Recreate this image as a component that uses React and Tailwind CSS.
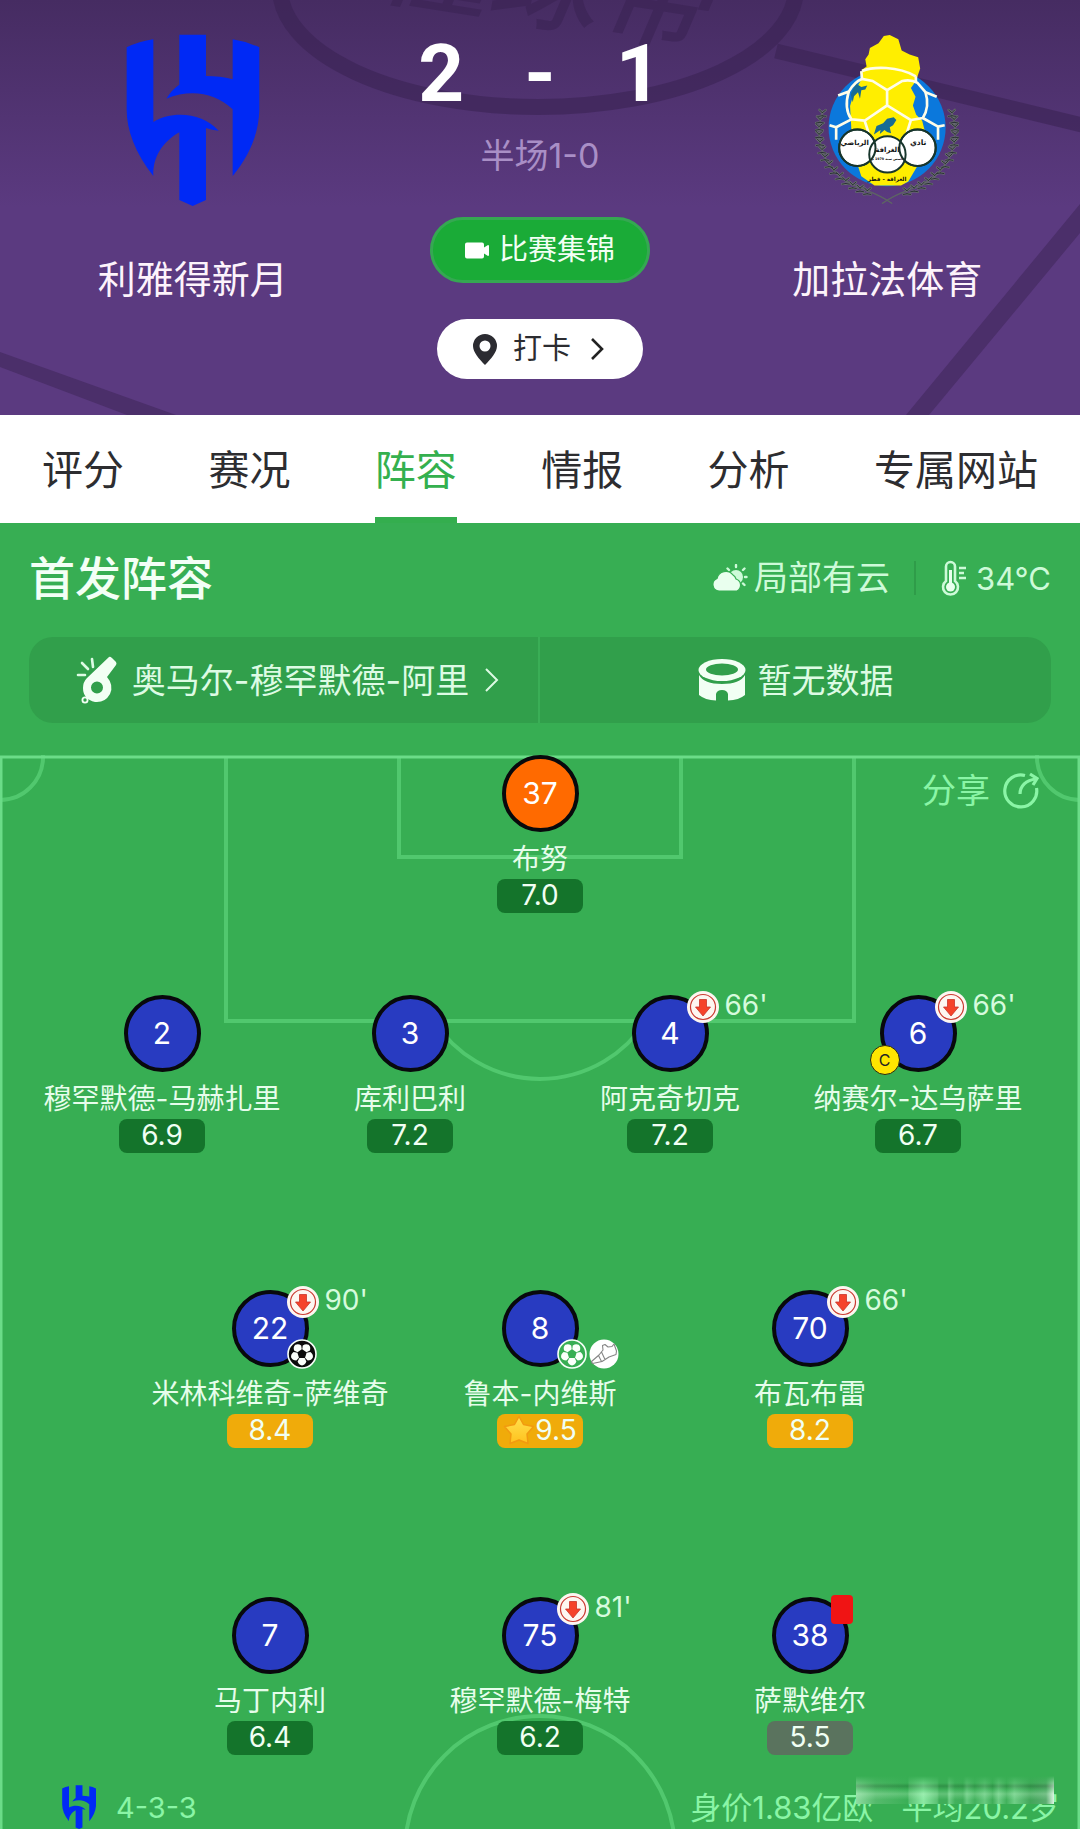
import React from 'react';

const tabs = ['评分', '赛况', '阵容', '情报', '分析', '专属网站'];

const keeper = { number: 37, name: '布努', rating: '7.0', keeper: true };

const leftBacks = [
  { number: 2, name: '穆罕默德-马赫扎里', rating: '6.9' },
  { number: 3, name: '库利巴利', rating: '7.2' },
];

const rightBacks = [
  { number: 4, name: '阿克奇切克', rating: '7.2', off: "66'" },
  { number: 6, name: '纳赛尔-达乌萨里', rating: '6.7', off: "66'", captain: true },
];

const midfielders = [
  { number: 22, name: '米林科维奇-萨维奇', rating: '8.4', off: "90'", goal: '#0b0b0b' },
  { number: 8, name: '鲁本-内维斯', rating: '9.5', goal: '#37ae53', assist: true, best: true },
  { number: 70, name: '布瓦布雷', rating: '8.2', off: "66'" },
];

const forwards = [
  { number: 7, name: '马丁内利', rating: '6.4' },
  { number: 75, name: '穆罕默德-梅特', rating: '6.2', off: "81'" },
  { number: 38, name: '萨默维尔', rating: '5.5', redCard: true },
];

function ratingColor(rating) {
  const value = Number(rating);
  if (value >= 8) return 'bg-[#f0ab0a]';
  if (value < 6) return 'bg-[#5a735e]';
  return 'bg-[#14742b]';
}

function HilalLogo({ className }) {
  return (
    <svg viewBox="80 42 400 516" className={className} fill="#0029f5" aria-hidden="true">
      <path d="M82 82 Q120 64 162 58 V306 C220 270 310 278 358 332 Q338 330 320 324 V540 L280 558 L240 540 V337 C190 366 160 410 162 468 C108 400 82 330 82 270 Z" />
      <path d="M240 44 H320 V168 Q362 168 400 178 V58 Q440 64 480 82 V270 C478 340 452 405 400 468 V268 C345 215 270 208 201 236 Q218 208 240 194 Z" />
    </svg>
  );
}

function GharafaLogo({ className }) {
  const leaves = [
    [62, 280], [55, 300], [52, 322], [52, 345], [55, 368], [61, 391], [70, 413], [82, 434],
    [97, 453], [114, 470], [133, 485], [154, 498], [176, 508], [198, 516],
  ];
  return (
    <svg viewBox="40 42 436 520" className={className} aria-hidden="true">
      {[false, true].map((flip) => (
        <g key={String(flip)} transform={flip ? 'translate(516 0) scale(-1 1)' : undefined} fill="none" strokeLinecap="round">
          <path d="M64 275 C36 350 60 440 140 490 C180 514 225 518 272 554" stroke="#5d6563" strokeWidth="4" />
          {leaves.map(([x, y]) => (
            <path key={y} d={`M${x} ${y} l-9 -9 M${x} ${y} l10 -8 M${x} ${y + 9} l-11 2 M${x} ${y + 9} l11 2`} stroke="#6a7170" strokeWidth="7" />
          ))}
          {leaves.map(([x, y]) => (
            <path key={y} d={`M${x} ${y} l-9 -9 M${x} ${y} l10 -8 M${x} ${y + 9} l-11 2 M${x} ${y + 9} l11 2`} stroke="#2a2f35" strokeWidth="3" />
          ))}
        </g>
      ))}
      <circle cx="258" cy="325" r="177" fill="#0b78dc" />
      <path d="M180 180 L182 150 L196 140 L192 118 L202 104 L206 84 L232 70 L248 48 L266 45 L292 58 L302 92 L326 104 L352 112 L358 146 L345 184 L330 205 L344 232 L336 258 L346 286 L364 304 L372 335 L362 420 L322 488 L300 500 L220 500 L180 472 L160 410 L150 330 L146 260 L158 218 Z" fill="#ffee00" />
      <path d="M164 192 l16 10 18 -4 -6 12 -12 2 -4 26 -6 -20 -12 12 -4 18 -6 -24 Z M218 346 l8 -26 20 -8 12 -14 20 -4 8 8 -10 16 -10 6 4 18 -12 -4 -8 -6 -14 12 2 -12 Z" fill="#176c94" />
      <g fill="none" stroke="#fffde8" strokeWidth="8">
        <path d="M182 154 C215 140 290 138 345 170" />
        <path d="M110 228 L142 216 Q160 186 182 178 L214 184 L258 212 L304 184 Q330 178 350 190 L374 218 L408 232" />
        <path d="M258 212 V258 L190 304 L202 340 M258 258 L330 302 L318 340 M142 216 C132 250 136 280 150 300 L190 304 M374 218 C384 250 380 274 366 296 L330 302 M150 300 L104 324 L84 318 M104 324 V362 M366 296 L412 322 L432 318 M412 322 V362 M182 178 L180 154 M345 190 V170" />
      </g>
      <g fill="#ffffff" stroke="#17352b" strokeWidth="6">
        <circle cx="168" cy="386" r="55" />
        <circle cx="350" cy="386" r="55" />
        <circle cx="259" cy="406" r="55" />
      </g>
      <g fill="none" stroke="#17352b" strokeWidth="6">
        <circle cx="168" cy="386" r="55" />
        <circle cx="350" cy="386" r="55" />
      </g>
      <g fill="#111111" fontFamily="DejaVu Sans, sans-serif" textAnchor="middle" fontWeight="700">
        <text x="160" y="378" fontSize="21">الرياضي</text>
        <text x="352" y="378" fontSize="23">نادي</text>
        <text x="259" y="398" fontSize="21">الغرافة</text>
        <text x="259" y="424" fontSize="10">تأسس سنة 1979 م</text>
        <text x="258" y="487" fontSize="17">الغرافة - قطر</text>
      </g>
    </svg>
  );
}

function HeaderBackdrop() {
  return (
    <svg viewBox="0 0 1080 415" preserveAspectRatio="xMidYMid slice" className="absolute inset-0 w-full h-full" aria-hidden="true">
      <g fill="none" stroke="#3b2354" strokeOpacity="0.6">
        <ellipse cx="538" cy="-12" rx="258" ry="119" strokeWidth="16" />
        <path d="M776 51 L1090 127" strokeWidth="15" />
      </g>
      <path d="M1080 204 L906 415 H929 L1080 233 Z M0 352 L176 415 H127 L0 367 Z" fill="#3b2354" fillOpacity="0.5" />
      <text x="376" y="-6" transform="rotate(9 376 -6)" fontSize="110" fontWeight="500" fontStyle="italic" fill="#3b2354" fillOpacity="0.6" fontFamily="Noto Sans CJK SC, sans-serif">懂球帝</text>
    </svg>
  );
}

function PitchLines() {
  return (
    <svg viewBox="0 0 1080 1074" preserveAspectRatio="xMidYMin slice" className="absolute inset-0 w-full h-full" fill="none" aria-hidden="true">
      <g stroke="#51c86e" strokeWidth="4">
        <path d="M226 2 V266 H854 V2" />
        <path d="M399 2 V102 H681 V2" />
        <path d="M434 266 A126 126 0 0 0 646 266" />
        <circle cx="540" cy="1096" r="135" />
        <circle cx="0" cy="2" r="43" />
        <circle cx="1080" cy="2" r="43" />
      </g>
      <path d="M1 1080 V2 H1079 V1080" stroke="#6bdc88" strokeWidth="3" />
    </svg>
  );
}

function SubOffIcon() {
  return (
    <svg viewBox="0 0 32 32" className="w-8 h-8" aria-hidden="true">
      <circle cx="16" cy="16" r="16" fill="#fdf6f1" />
      <circle cx="16" cy="16" r="12.5" fill="none" stroke="#c93a31" strokeWidth="1.2" />
      <path d="M12.5 8.5 H19.5 V16 H23.5 L16 25 L8.5 16 H12.5 Z" fill="#f5432b" stroke="#c9342a" strokeWidth="0.8" />
    </svg>
  );
}

function BallIcon({ color }) {
  const spots = [0, 72, 144, 216, 288];
  return (
    <svg viewBox="0 0 30 30" className="w-[30px] h-[30px]" aria-hidden="true">
      <circle cx="15" cy="15" r="14" fill={color} stroke="#f6fff8" strokeWidth="1.6" />
      {spots.map((angle) => (
        <path key={angle} d="M12.4 19 H17.6 L19.4 22.4 Q18.2 26 15 26.4 Q11.8 26 10.6 22.4 Z" fill="#fbfffb" transform={`rotate(${angle} 15 15)`} />
      ))}
    </svg>
  );
}

function BootIcon() {
  return (
    <svg viewBox="0 0 30 30" className="w-[30px] h-[30px]" aria-hidden="true">
      <circle cx="15" cy="15" r="14.5" fill="#ffffff" />
      <path d="M2.500 22.500 L10 16 L14 11 L13.500 6.500 L16 5.500 L19 8 L23 7.500 L25 5 L27.500 12 L27 15.500 L20 18 L13 22.500 L3.500 24.500 Z M9.500 16.500 L12.500 22.500 M12.500 13 L16 20.500" fill="#ffffff" stroke="#858585" strokeWidth="1.1" strokeLinejoin="round" />
    </svg>
  );
}

function StarIcon() {
  return (
    <svg viewBox="0 0 32 32" className="w-8 h-8" aria-hidden="true">
      <defs>
        <linearGradient id="star" x1="0" y1="0" x2="0" y2="1">
          <stop offset="0" stopColor="#ffe14e" />
          <stop offset="1" stopColor="#ffc11d" />
        </linearGradient>
      </defs>
      <path d="M16 2.500 L20.500 10.500 L30.500 12.500 L24 20 L25 29.500 L16 26 L7 29.500 L8 20 L1.500 12.500 L11.500 10.500 Z" fill="url(#star)" stroke="#f29a10" strokeWidth="1.5" strokeLinejoin="round" />
    </svg>
  );
}

function Player({ player }) {
  return (
    <div className="flex flex-col items-center">
      <div className="relative">
        <div
          className={`w-[77px] h-[77px] pb-0.5 rounded-full border-4 border-[#08090c] flex items-center justify-center text-white text-[30px] leading-none ${
            player.keeper ? 'bg-[#ff6a00]' : 'bg-[#283bc1]'
          }`}
        >
          {player.number}
        </div>
        {player.off && (
          <div className="absolute left-[55px] -top-1 flex items-start gap-1.5">
            <SubOffIcon />
            <span className="text-[28px] leading-7 text-[#d5fbdd]">{player.off}</span>
          </div>
        )}
        {player.captain && (
          <span className="absolute -left-2.5 top-[50px] w-[30px] h-[30px] rounded-full border border-[#2a2a10] bg-[#ffe500] flex items-center justify-center text-[16px] leading-none text-[#222]">
            C
          </span>
        )}
        {player.goal && (
          <div className="absolute left-[55px] top-[49px] flex gap-0.5">
            <BallIcon color={player.goal} />
            {player.assist && <BootIcon />}
          </div>
        )}
        {player.redCard && (
          <span className="absolute left-[59px] -top-0.5 w-[22px] h-[29px] rounded-sm bg-[#f01414]" />
        )}
      </div>
      <div className="mt-2.5 text-[28px] leading-[34px] text-[#e6fdeb] whitespace-nowrap">{player.name}</div>
      <div
        className={`mt-[3px] w-[86px] h-[34px] pb-0.5 rounded-lg flex items-center justify-center text-[28px] leading-none text-[#f0fff3] ${ratingColor(player.rating)}`}
      >
        {player.best && <StarIcon />}
        {player.rating}
      </div>
    </div>
  );
}

function MatchHeader() {
  return (
    <header className="relative overflow-hidden bg-[linear-gradient(180deg,#462c62_0%,#5b3a80_50%,#5b3a80_100%)]">
      <HeaderBackdrop />
      <div className="relative grid grid-cols-[5fr_4fr_5fr] pb-9">
        <div className="flex flex-col items-center pt-[34px]">
          <HilalLogo className="h-[172px]" />
          <div className="mt-[49px] pb-px text-[38px] leading-[48px] text-[#fdf3fb]">利雅得新月</div>
        </div>

        <div className="flex flex-col items-center pt-11">
          <div className="flex items-center justify-center gap-[60px] font-[Roboto] font-bold text-[80px] leading-[60px] text-white">
            <span>2</span>
            <span>-</span>
            <span>1</span>
          </div>
          <div className="mt-8 text-[34px] leading-10 text-[#a98fc6]">半场1-0</div>
          <button className="mt-[41px] h-[66px] px-8 rounded-full border-[3px] border-[#35a852] bg-[#1aab37] flex items-center gap-2.5 text-[29px] text-[#f2fff4]">
            <svg viewBox="0 0 24 17" className="w-6" fill="#ffffff" aria-hidden="true">
              <path d="M2 0.5 H17 Q19 0.5 19 2.5 V5.5 L23 3 Q24 3 24 4 V13 Q24 14 23 14 L19 11.5 V14.5 Q19 16.5 17 16.5 H2 Q0 16.5 0 14.5 V2.5 Q0 0.5 2 0.5 Z" />
            </svg>
            比赛集锦
          </button>
          <button className="mt-9 h-[60px] px-9 rounded-full bg-white flex items-center gap-4 text-[29px] text-[#2c2c30]">
            <svg viewBox="0 0 24 31" className="w-6" fill="#2b2b31" aria-hidden="true">
              <path fillRule="evenodd" d="M12 0 A12 12 0 0 1 24 12 C24 18 18 25 12 31 C6 25 0 18 0 12 A12 12 0 0 1 12 0 Z M12 6.500 A5.500 5.500 0 1 0 12 17.500 A5.500 5.500 0 1 0 12 6.500 Z" />
            </svg>
            打卡
            <svg viewBox="0 0 20 24" className="w-5" fill="none" stroke="#222" strokeWidth="2.6" aria-hidden="true">
              <path d="M5 2 L15 12 L5 22" />
            </svg>
          </button>
        </div>

        <div className="flex flex-col items-center pt-[34px]">
          <GharafaLogo className="h-[172px]" />
          <div className="mt-[49px] pb-px text-[38px] leading-[48px] text-[#fdf3fb]">加拉法体育</div>
        </div>
      </div>
    </header>
  );
}

function Tabs() {
  return (
    <nav className="bg-white h-[108px] px-[42px] flex justify-between text-[41px]">
      {tabs.map((tab) => (
        <a
          key={tab}
          href="#"
          className={`flex items-center border-b-[6px] pt-2.5 ${
            tab === '阵容' ? 'text-[#34b04e] border-[#34ae4e]' : 'text-[#2d2d30] border-transparent'
          }`}
        >
          {tab}
        </a>
      ))}
    </nav>
  );
}

function LineupInfo() {
  return (
    <div className="px-[29px] pt-[27px] pb-8">
      <div className="h-14 flex items-center justify-between">
        <h2 className="text-[46px] leading-none font-medium text-[#f3fff6]">首发阵容</h2>
        <div className="flex items-center text-[34px] leading-none text-[#cdfad8]">
          <svg viewBox="0 0 36 28" className="w-9 mr-1.5" aria-hidden="true">
            <g stroke="#cdfad8" strokeWidth="2.4" strokeLinecap="round">
              <path d="M24 1 V3 M15.500 4.500 L17 6 M32.500 4.500 L31 6 M34.500 13 H33 M32.500 21 L31 19.500" />
            </g>
            <circle cx="24" cy="13" r="7" fill="#cdfad8" />
            <path d="M7 27 A6.500 6.500 0 0 1 5 14.500 A9 9 0 0 1 21 11 A7 7 0 0 1 24 15 A6.500 6.500 0 0 1 25 27 Z" fill="#e9ffee" stroke="#37ae53" strokeWidth="1.2" />
          </svg>
          局部有云
          <span className="w-0.5 h-[34px] mx-6 bg-[#2f9c49]" />
          <svg viewBox="0 0 26 36" className="w-[26px] mr-2.5" fill="none" aria-hidden="true">
            <path d="M6 21 V6.500 A4.500 4.500 0 0 1 15 6.500 V21 A7.500 7.500 0 1 1 6 21 Z" stroke="#cdfad8" strokeWidth="2.6" />
            <path d="M10.500 10 V27" stroke="#e9ffee" strokeWidth="3" />
            <circle cx="10.500" cy="27" r="4.500" fill="#e9ffee" />
            <path d="M19 8 H26 M19 13 H24 M19 18 H26" stroke="#cdfad8" strokeWidth="2.4" />
          </svg>
          <span className="text-[31px]">34°C</span>
        </div>
      </div>

      <div className="mt-[31px] h-[86px] rounded-3xl bg-[#319f4b] grid grid-cols-2 text-[34px] text-[#ddfbe4]">
        <button className="pl-2 flex items-center justify-center border-r-2 border-[#3aae56]">
          <svg viewBox="0 0 42 48" className="w-[42px] mr-3.5" fill="none" aria-hidden="true">
            <path d="M2 19 H9 M6 7 L12 13 M16 3 L17 11" stroke="#ddfbe4" strokeWidth="2.6" strokeLinecap="round" />
            <path fillRule="evenodd" d="M33 1 Q34 0 36 2 L40 6 Q41 8 40 9 L31 21 Q38 29 34 38 Q29 47 19 46 Q7 43 7 32 Q7 26 11 22 Z M21 25.500 A6 6 0 1 0 21 37.500 A6 6 0 1 0 21 25.500 Z" fill="#f2fff4" />
            <circle cx="9" cy="44" r="2.600" stroke="#f2fff4" strokeWidth="1.8" />
          </svg>
          奥马尔-穆罕默德-阿里
          <svg viewBox="0 0 14 24" className="w-3.5 ml-4" fill="none" stroke="#ddfbe4" strokeWidth="2" aria-hidden="true">
            <path d="M1 1 L12 12 L1 23" />
          </svg>
        </button>
        <button className="flex items-center justify-center gap-3">
          <svg viewBox="0 0 48 42" className="w-12" aria-hidden="true">
            <path d="M1 16 Q6 25 24 25 Q42 25 47 16 V36 Q41 41 30 41.500 V35 Q29 31 24 31 Q19 31 18 35 V41.500 Q7 41 1 36 Z" fill="#f2fff4" />
            <ellipse cx="24" cy="11" rx="23.500" ry="11" fill="#f2fff4" />
            <ellipse cx="24" cy="10.500" rx="16" ry="6" fill="#319f4b" />
          </svg>
          暂无数据
        </button>
      </div>
    </div>
  );
}

export default function App() {
  return (
    <div className="bg-[#37ae53] overflow-hidden font-[Inter,'Noto_Sans_CJK_SC',sans-serif]">
      <MatchHeader />
      <Tabs />
      <LineupInfo />

      <main className="relative">
        <PitchLines />
        <button className="absolute right-10 top-4 flex items-center gap-3 text-[34px] leading-10 text-[#8af5a6]">
          分享
          <svg viewBox="0 0 38 38" className="w-[38px]" fill="none" stroke="#8af5a6" strokeWidth="3.2" aria-hidden="true">
            <path d="M23 3.500 A16 16 0 1 0 34.500 16" />
            <path d="M18 22 C18 14 24 8 34 7" />
            <path d="M28 2 L35 6.500 L31 13" />
          </svg>
        </button>

        <div className="relative pointer-events-none">
          <Player player={keeper} />
          <div className="mt-[82px] px-[38px] grid grid-cols-2 gap-3">
            {[leftBacks, rightBacks].map((pair) => (
              <div key={pair[0].number} className="grid grid-cols-2">
                {pair.map((player) => <Player key={player.number} player={player} />)}
              </div>
            ))}
          </div>
          <div className="mt-[137px] px-[12.5%] grid grid-cols-3">
            {midfielders.map((player) => <Player key={player.number} player={player} />)}
          </div>
          <div className="mt-[149px] px-[12.5%] grid grid-cols-3">
            {forwards.map((player) => <Player key={player.number} player={player} />)}
          </div>
        </div>

        <footer className="relative mt-[30px] pl-[62px] pr-5 h-11 flex items-center justify-between text-[#8af5a6]">
          <div className="flex items-center gap-5 text-[29px] leading-none">
            <HilalLogo className="h-11" />
            4-3-3
          </div>
          <div className="relative flex gap-7 text-[31px] leading-none">
            <span>身价1.83亿欧</span>
            <span>平均20.2岁</span>
            {/* smudged strip over the top half of the line */}
            <div className="absolute right-1.5 -top-4 w-[198px] h-7 overflow-hidden">
              <div className="h-full bg-[linear-gradient(90deg,#8fdca1_0%,#55ba6c_10%,#3bb057_26%,#5cc274_27%,#8ceaa4_34%,#5cc274_41%,#3fae59_42%,#3fae59_46%,#6fce86_47%,#42b15c_50%,#3fae59_54%,#68ca80_56%,#42b15c_60%,#68ca80_65%,#3fae59_69%,#6fce86_72%,#42b15c_76%,#6fce86_80%,#42a65a_88%,#5bae70_96%,#dff5e4_100%)]" />
              <div className="absolute inset-0 bg-[linear-gradient(180deg,#37ae53_0%,rgba(55,174,83,0.5)_25%,rgba(15,80,30,0.3)_36%,rgba(55,174,83,0.3)_48%,rgba(200,250,210,0.25)_64%,transparent_85%)]" />
            </div>
          </div>
        </footer>
      </main>
    </div>
  );
}
